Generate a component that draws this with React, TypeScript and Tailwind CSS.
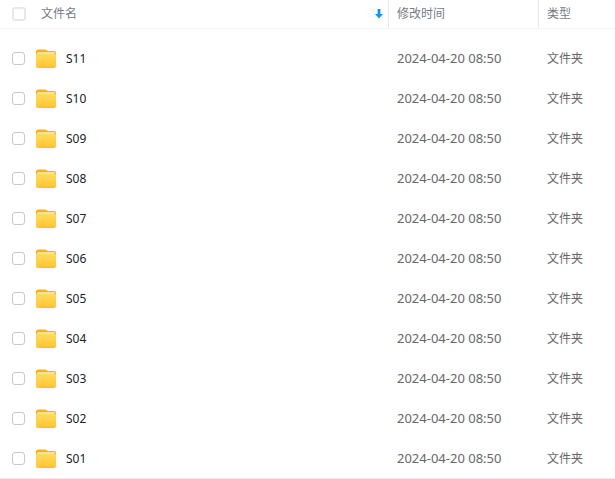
import React from "react";

const folders = ["S11", "S10", "S09", "S08", "S07", "S06", "S05", "S04", "S03", "S02", "S01"];

const FolderIcon = () => (
  <svg width="20" height="20" viewBox="0 0 20 20" className="shrink-0" aria-hidden="true">
    <defs>
      <linearGradient id="folderFront" x1="0" y1="0" x2="0" y2="1">
        <stop offset="0" stopColor="#ffdc65" />
        <stop offset="1" stopColor="#ffc529" />
      </linearGradient>
    </defs>
    <path d="M0 3C0 1.400.9.600 2.200.600H9c.9 0 1.400.2 2 .7l.9.700H18c1.200 0 2 .8 2 2V9H0z" fill="#fbb01c" />
    <path d="M1.500 3.200h17v4h-17z" fill="#fff0bd" />
    <path d="M0 6.500C0 5.300.8 4.600 2 4.600h16c1.200 0 2 .7 2 1.900V17c0 1.200-.8 2-2 2H2c-1.200 0-2-.8-2-2z" fill="url(#folderFront)" />
    <path d="M.6 18.300c.4.500.9.700 1.600.7h15.600c.7 0 1.200-.2 1.600-.7z" fill="#fdbc20" />
  </svg>
);

const SortArrow = () => (
  <svg width="8" height="10" viewBox="0 0 8 10" aria-hidden="true">
    <path d="M2.600 0h2.800v5H8L4 9.500 0 5h2.600z" fill="#0a95ff" />
  </svg>
);

const App = () => {
  return (
    <div className="bg-white font-['Noto_Sans','Noto_Sans_CJK_SC',sans-serif] text-xs text-[#666]">
      <table className="w-full table-fixed border-separate border-spacing-0 text-left">
        <colgroup>
          <col />
          <col className="w-[150px]" />
          <col className="w-[76px]" />
        </colgroup>
        <thead className="text-[#777b85]">
          <tr className="h-[29px]">
            <th className="border-r border-b border-r-[#e8e8e8] border-b-[#f3f3f3] p-0 pr-1 pl-3 font-normal">
              <div className="flex items-center">
                <input
                  type="checkbox"
                  aria-label="全选"
                  className="h-[14px] w-[14px] appearance-none rounded-[3px] border-2 border-[#e8e8e8] bg-white checked:bg-[#0a95ff]"
                />
                <button type="button" className="ml-[15px] flex flex-1 items-center justify-between pr-px">
                  文件名
                  <SortArrow />
                </button>
              </div>
            </th>
            <th className="border-r border-b border-r-[#e8e8e8] border-b-[#f3f3f3] p-0 pl-2 font-normal">修改时间</th>
            <th className="border-b border-[#f3f3f3] p-0 pl-2 font-normal">类型</th>
          </tr>
        </thead>

        {/* 文件夹列表 */}
        <tbody className="before:block before:h-[10px] [&_td]:border-b [&_td]:border-transparent [&>tr:last-child>td]:border-[#ededed]">
          {folders.map((name) => (
            <tr key={name} className="h-10">
              <td className="p-0 pl-3">
                <label className="flex items-center">
                  <input
                    type="checkbox"
                    className="h-[13px] w-[13px] appearance-none rounded-[3px] border border-[#c8c8c8] bg-white checked:bg-[#0a95ff]"
                  />
                  <span className="ml-[11px] flex items-center gap-[10px] text-[#222]">
                    <FolderIcon />
                    {name}
                  </span>
                </label>
              </td>
              <td className="p-0 pl-2 text-[13px]">2024-04-20 08:50</td>
              <td className="p-0 pl-2">文件夹</td>
            </tr>
          ))}
        </tbody>
      </table>
    </div>
  );
};

export default App;
